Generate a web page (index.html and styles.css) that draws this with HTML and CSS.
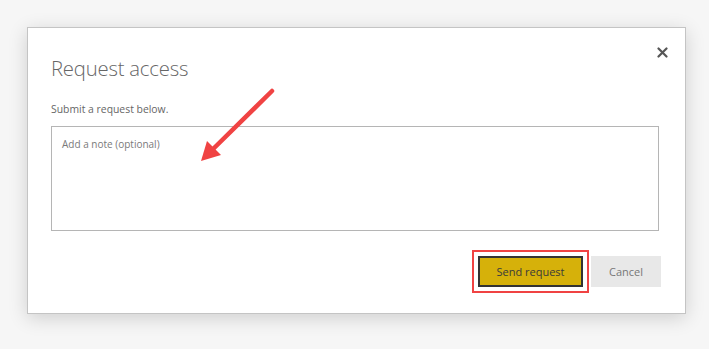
FILE: index.html
```html
<!DOCTYPE html>
<html lang="en">
<head>
  <meta charset="UTF-8" />
  <meta name="viewport" content="width=device-width, initial-scale=1.0" />
  <title>Request access</title>
  <link rel="stylesheet" href="styles.css">
</head>
<body>
  <div class="dialog">
    <!-- Close button -->
    <button class="close" aria-label="Close">
      <svg width="11" height="11" viewBox="0 0 11 11">
        <path d="M1.5 1.5 L9.5 9.5 M9.5 1.5 L1.5 9.5" stroke="#555" stroke-width="2.2" stroke-linecap="round" />
      </svg>
    </button>

    <h1 class="title">Request access</h1>
    <p class="subtitle">Submit a request below.</p>
    <textarea class="note" placeholder="Add a note (optional)"></textarea>

    <div class="actions">
      <button class="btn btn-primary">Send request</button>
      <button class="btn btn-cancel">Cancel</button>
    </div>

    <!-- Annotation arrow -->
    <svg class="arrow" width="90" height="90" viewBox="0 0 90 90">
      <path d="M78 6 L14 69" stroke="#f04343" stroke-width="4.5" stroke-linecap="round" fill="none" />
      <path d="M7 76 L13 56 L27 70 Z" fill="#f04343" />
    </svg>
  </div>
</body>
</html>
```

FILE: styles.css
```css
body {
  margin: 0;
  padding: 27px 0 0 27px;
  background: #f6f6f6;
  font-family: 'Open Sans', sans-serif;
  color: #666;
  height: 349px;
  box-sizing: border-box;
  overflow: hidden;
}
.dialog {
  position: relative;
  width: 659px;
  height: 287px;
  box-sizing: border-box;
  background: #fff;
  border: 1px solid #c4c4c4;
  box-shadow: 0 4px 18px rgba(0, 0, 0, 0.16);
  padding: 25px 24px 0 23px;
}
.close {
  position: absolute;
  top: 19px;
  right: 17px;
  background: none;
  border: none;
  padding: 0;
  width: 11px;
  height: 11px;
  cursor: pointer;
}
.close svg {
  display: block;
}
.title {
  margin: 0;
  font-size: 20.3px;
  font-weight: 300;
  line-height: 30px;
  color: #666;
  letter-spacing: -0.2px;
}
.subtitle {
  margin: 18px 0 0;
  font-size: 10.4px;
  line-height: 16px;
  color: #666;
}
.note {
  display: block;
  margin-top: 9px;
  width: 608px;
  height: 105px;
  box-sizing: border-box;
  border: 1px solid #b5b5b5;
  padding: 10px 10px;
  font-family: 'Open Sans', sans-serif;
  font-size: 10px;
  resize: none;
}
.note::placeholder {
  color: #7a7a7a;
}
.actions {
  display: flex;
  justify-content: flex-end;
  gap: 8px;
  margin-top: 25px;
}
.btn {
  height: 31px;
  box-sizing: border-box;
  font-family: 'Open Sans', sans-serif;
  font-size: 11px;
  border: none;
  cursor: pointer;
  padding: 0;
}
.btn-primary {
  width: 105px;
  background: #d6b10a;
  color: #3a3a3a;
  border: 2px solid #333;
  outline: 2px solid #f04343;
  outline-offset: 4px;
}
.btn-cancel {
  width: 70px;
  background: #e8e8e8;
  color: #777;
}
.arrow {
  position: absolute;
  left: 166px;
  top: 57px;
}
```
